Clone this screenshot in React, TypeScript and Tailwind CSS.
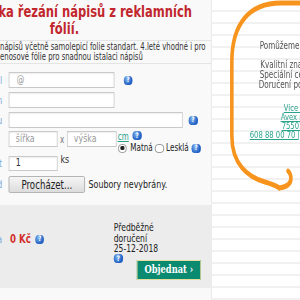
import React from "react";

const labelCls =
  "w-[118px] shrink-0 whitespace-nowrap pr-[9px] text-right text-[11px] leading-none text-[#7aa9dc]";
const inputCls =
  "border border-[#c9c9c9] bg-white text-[11px] text-[#333] shadow-[inset_0_1px_2px_rgba(0,0,0,0.07)] outline-none placeholder:text-[#9a9a9a]";

function Help({ className = "" }: { className?: string }) {
  return (
    <span
      className={`inline-flex h-[9px] w-[12.5px] shrink-0 items-center justify-center rounded-full bg-[radial-gradient(circle_at_40%_30%,#8cbcf2,#2060c4_65%)] text-[7.5px] font-bold leading-none text-white ${className}`}
    >
      ?
    </span>
  );
}

function Radio({ checked }: { checked?: boolean }) {
  return (
    <span className="inline-flex h-[9px] w-[12.5px] shrink-0 items-center justify-center rounded-full border border-[#8a8a8a] bg-white">
      {checked && <span className="h-[4px] w-[5.5px] rounded-full bg-[#222]" />}
    </span>
  );
}

export default function App() {
  return (
    <div className="relative h-[300px] w-[300px] overflow-hidden bg-white font-['DejaVu_Sans',sans-serif] text-[#333]">
      <div className="flex h-[300px] w-[417px] origin-top-left scale-x-[0.72]">
        {/* order form */}
        <div className="-ml-[106px] flex w-[400px] shrink-0 flex-col border-r border-[#e3e3e3] bg-[#f9f9f9]">
          <h1 className="border-b border-[#e4e4e4] pt-[3px] pr-[8px] pb-[3px] text-center text-[16px] font-bold leading-[17px] text-[#c1272d]">
            Objednávka řezání nápisů z reklamních
            <br />
            fólií.
          </h1>
          <p className="whitespace-nowrap border-b border-[#e4e4e4] py-[1px] pl-[106px] text-[9.6px] leading-[10px] text-[#333]">
            nápisů včetně samolepicí folie standart. 4.leté vhodné i pro
            <br />
            enosové fólie pro snadnou istalaci nápisů
          </p>

          <div className="flex flex-col">
            <div className="mt-[8px] flex h-[16px] items-center">
              <span className={labelCls}>E-mail</span>
              <input readOnly placeholder="@" className={`${inputCls} h-[16px] w-[147px] px-[10px]`} />
              <Help className="ml-[12.5px]" />
            </div>
            <div className="mt-[4px] flex h-[16px] items-center">
              <span className={labelCls}>Telefon</span>
              <input readOnly className={`${inputCls} h-[16px] w-[147px] px-[10px]`} />
            </div>
            <div className="mt-[4px] flex h-[16px] items-center">
              <span className={labelCls}>Text nápisu</span>
              <input readOnly className={`${inputCls} h-[16px] w-[242px] px-[10px]`} />
              <Help className="ml-[8px]" />
            </div>
            <div className="mt-[3px] flex h-[22px] items-start">
              <span className={`${labelCls} opacity-0`}>Rozměr</span>
              <input readOnly placeholder="šířka" className={`${inputCls} h-[16px] w-[68px] px-[9px]`} />
              <span className="flex h-[16px] w-[12.5px] items-center justify-center text-[10px] text-[#777]">x</span>
              <input readOnly placeholder="výška" className={`${inputCls} h-[16px] w-[69.5px] px-[9px]`} />
              <div className="ml-[1.5px] flex flex-col">
                <div className="flex h-[12px] items-start">
                  <span className="mt-[1px] text-[10px] leading-[10px] text-[#2aa38d] underline">cm</span>
                  <Help className="ml-[5.5px]" />
                </div>
                <div className="flex h-[10px] items-center">
                  <Radio checked />
                  <span className="ml-[5px] text-[10px] leading-none text-[#222]">Matná</span>
                  <span className="ml-[3px]">
                    <Radio />
                  </span>
                  <span className="ml-[3px] text-[10px] leading-none text-[#222]">Lesklá</span>
                  <Help className="ml-[4px]" />
                </div>
              </div>
            </div>
            <div className="mt-[3px] flex h-[15px] items-start">
              <span className={`${labelCls} mt-[2px]`}>Počet</span>
              <input readOnly value="1" className={`${inputCls} h-[15px] w-[68px] px-[9px]`} />
              <span className="ml-[4px] text-[11px] leading-[8px] text-[#333]">ks</span>
            </div>
            <div className="mt-[5px] flex h-[17px] items-center">
              <span className={labelCls}>Podklad</span>
              <button className="h-[17px] w-[106px] rounded-[2px] border border-[#a9a9a9] bg-[linear-gradient(#f6f6f6,#dcdcdc)] text-[12px] leading-none text-[#222]">
                Procházet...
              </button>
              <span className="ml-[5px] whitespace-nowrap text-[11px] leading-none text-[#222]">Soubory nevybrány.</span>
            </div>
          </div>

          <div className="mt-[12px] flex h-[83px] items-start bg-[#ececec] pt-[17px]">
            <div className="mt-[11px] flex h-[12px] w-[264px] shrink-0 items-center">
              <span className={labelCls}>Cena</span>
              <span className="ml-[2px] text-[12px] font-bold leading-none text-[#d1302c]">0 Kč</span>
              <Help className="ml-[6px]" />
            </div>
            <div className="flex w-[121px] flex-col">
              <p className="text-[10.6px] leading-[10.5px] text-[#222]">
                Předběžné
                <br />
                doručení
                <br />
                25-12-2018
              </p>
              <div className="flex items-start justify-between">
                <Help className="mt-[0.5px]" />
                <button className="mt-[6px] flex h-[20px] w-[89px] items-center justify-center border border-[#e6dc9c] bg-[#0b8a72] font-['DejaVu_Serif',serif] text-[11.5px] font-bold leading-none text-white">
                  Objednat ›
                </button>
              </div>
            </div>
          </div>
        </div>

        {/* right column with help bubble */}
        <div className="relative flex-1 bg-[repeating-linear-gradient(to_bottom,transparent_0,transparent_10px,#f1f1f1_10px,#f1f1f1_12px)]">
          <svg className="absolute inset-0" width="123" height="300" viewBox="0 0 123 300" fill="none">
            <path
              d="M128 3 L96 3 C52 3 28 24 28 62 L28 136 C28 164 50 177 74 182 C84 184 90 186 94 188"
              stroke="#f7941e"
              strokeWidth="5"
              strokeLinecap="round"
              strokeLinejoin="round"
            />
            <path
              d="M94 188 C104 187 111 184 110 177 C109 173 108 172 106 171"
              stroke="#f7941e"
              strokeWidth="5"
              strokeLinecap="round"
            />
          </svg>
          <div className="absolute inset-0 flex flex-col whitespace-nowrap text-[10px] leading-[10px] text-[#555]">
            <div className="mt-[41px] ml-[66.7px]">Pomůžeme vám s výběrem</div>
            <div className="mt-[9px] ml-[67.6px]">Kvalitní značkové fólie</div>
            <div className="ml-[66.7px]">Speciální ceny pro firmy</div>
            <div className="ml-[65.3px]">Doručení po celé ČR</div>
            <div className="mt-[12.5px] flex flex-col text-[9.5px] leading-[9px] text-[#2aa38d] underline">
              <span className="ml-[100px]">Více informací</span>
              <span className="ml-[95.8px]">Avex reklama</span>
              <span className="ml-[97.2px]">75501 Vsetín</span>
              <span className="ml-[52.8px]">608 88 00 70 | info@avex.cz</span>
            </div>
          </div>
        </div>
      </div>
    </div>
  );
}
